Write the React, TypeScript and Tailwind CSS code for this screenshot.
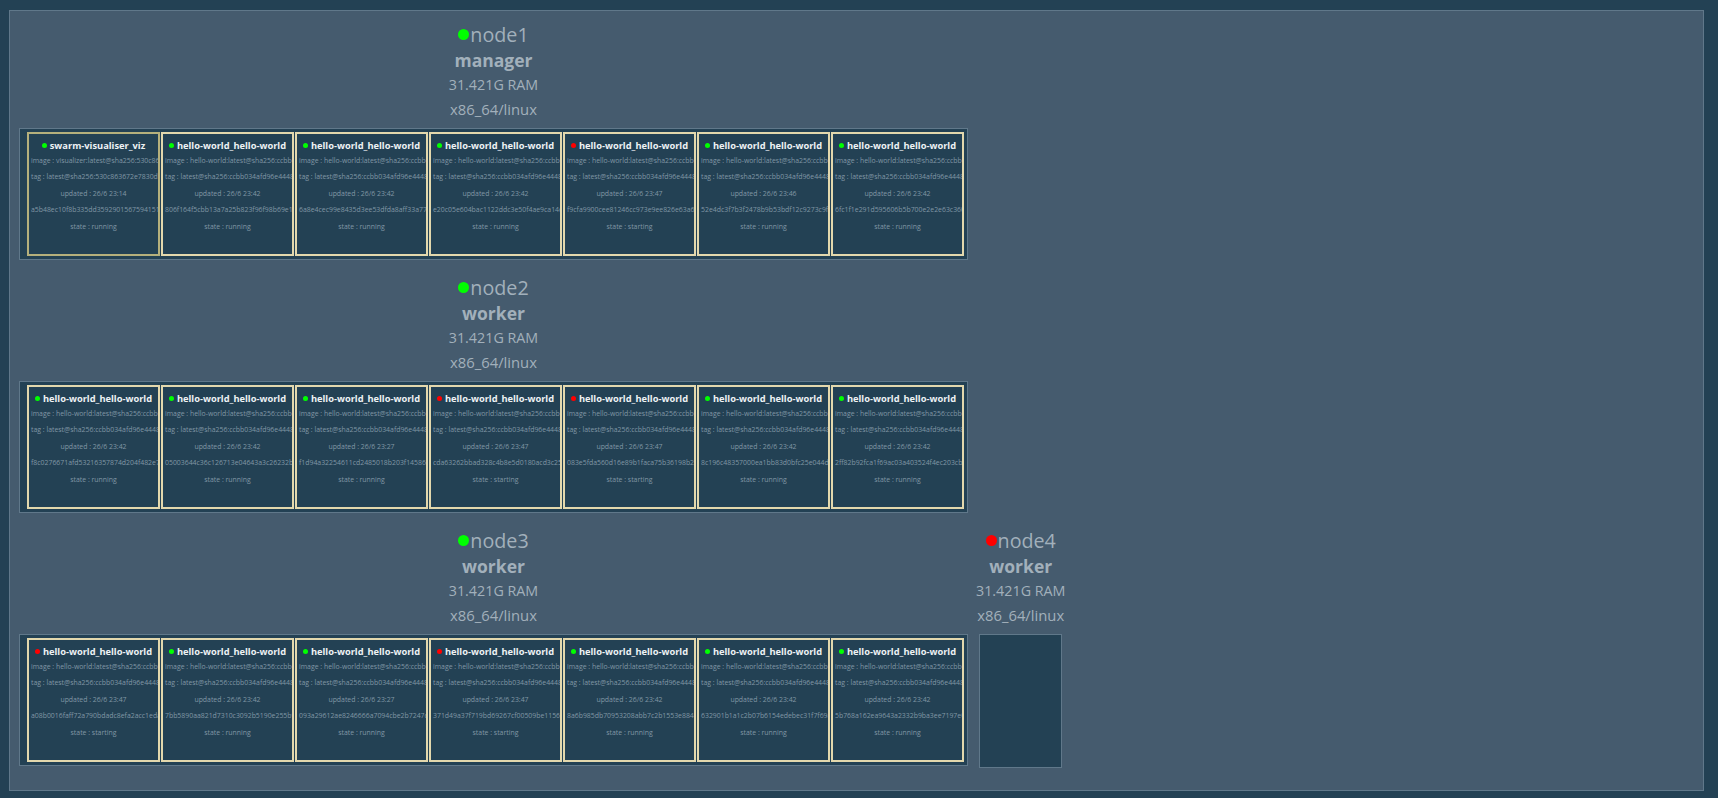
import React from "react";

type C = { name: string; ok: boolean; image: string; tag: string; upd: string; hash: string; state: string };
const HW = "hello-world:latest@sha256:ccbb034afd96e4448b";
const HT = "latest@sha256:ccbb034afd96e4448b";
const mk = (ok: boolean, upd: string, hash: string): C => ({ name: "hello-world_hello-world", ok, image: HW, tag: HT, upd, hash, state: ok ? "running" : "starting" });

const nodes: { name: string; ok: boolean; role: string; cards: C[] }[] = [
  { name: "node1", ok: true, role: "manager", cards: [
    { name: "swarm-visualiser_viz", ok: true, image: "visualizer:latest@sha256:530c863672e7830d7", tag: "latest@sha256:530c863672e7830d7", upd: "23:14", hash: "a5b48ec10f8b335dd359290156759415101", state: "running" },
    mk(true, "23:42", "806f164f5cbb13a7a25b823f96f98b69e1a6"),
    mk(true, "23:42", "6a8e4cec99e8435d3ee53dfda8aff33a77d"),
    mk(true, "23:42", "e20c05e604bac1122ddc3e50f4ae9ca14d6"),
    mk(false, "23:47", "f9cfa9900cee81246cc973e9ee826e63a6"),
    mk(true, "23:46", "52e4dc3f7b3f2478b9b53bdf12c9273c9f"),
    mk(true, "23:42", "6fc1f1e291d595606b5b700e2e2e63c360a"),
  ]},
  { name: "node2", ok: true, role: "worker", cards: [
    mk(true, "23:42", "f8c0276671afd53216357874d204f482e7a"),
    mk(true, "23:42", "05003644c36c126713e04643a3c26232b5f"),
    mk(true, "23:27", "f1d94a32254611cd2485018b203f14586c3"),
    mk(false, "23:47", "cda63262bbad328c4b8e5d0180acd3c252"),
    mk(false, "23:47", "083e5fda560d16e89b1faca75b36198b27"),
    mk(true, "23:42", "8c196c48357000ea1bb83d0bfc25e044d4"),
    mk(true, "23:42", "2ff82b92fca1f69ac03a403524f4ec203cb"),
  ]},
  { name: "node3", ok: true, role: "worker", cards: [
    mk(false, "23:47", "a08b0016faff72a790bdadc8efa2acc1eda"),
    mk(true, "23:42", "7bb5890aa821d7310c3092b5190e255b9"),
    mk(true, "23:27", "093a29612ae8246666a7094cbe2b7247d5"),
    mk(false, "23:47", "371d49a37f719bd69267cf00509be1156"),
    mk(true, "23:42", "8a6b985db70953208abb7c2b1553e884e"),
    mk(true, "23:42", "632901b1a1c2b07b6154edebec31f7f69a"),
    mk(true, "23:42", "5b768a162ea9643a2332b9ba3ee7197e05"),
  ]},
  { name: "node4", ok: false, role: "worker", cards: [] },
];

const Dot = ({ ok, s }: { ok: boolean; s: string }) => (
  <span className={`inline-block shrink-0 rounded-full ${s} ${ok ? "bg-[#00ff00]" : "bg-[#ff0000]"}`} />
);

function Card({ c, first }: { c: C; first: boolean }) {
  return (
    <div className={`w-[133px] h-[124px] shrink-0 bg-[#234154] border-2 ${first ? "border-[#b5b07c]" : "border-[#e3d8ad]"} overflow-hidden text-center`}>
      <div className="mt-[4px] h-[15px] flex items-center justify-center gap-[3px] text-[9.3px] font-bold text-[#eef2f4] whitespace-nowrap">
        <Dot ok={c.ok} s="w-[5px] h-[5px]" />
        <span>{c.name}</span>
      </div>
      <div className="text-[6.9px] text-[#8197a5] leading-[16.4px] whitespace-nowrap">
        <div className="pl-[2px] text-left overflow-hidden">image : {c.image}</div>
        <div className="pl-[2px] text-left overflow-hidden">tag : {c.tag}</div>
        <div>updated : 26/6 {c.upd}</div>
        <div className="pl-[2px] text-left overflow-hidden">{c.hash}</div>
        <div>state : {c.state}</div>
      </div>
    </div>
  );
}

export default function App() {
  return (
    <div className="w-[1718px] h-[798px] bg-[#234154] pt-[10px] pl-[9px]" style={{ fontFamily: '"Open Sans", sans-serif' }}>
      <div className="w-[1695px] h-[781px] bg-[#455b6e] border border-[#60788a] flex flex-wrap items-start content-start gap-x-[8px] pl-[9px] pt-[10px]">
        {nodes.map((n) => (
          <div key={n.name} className="flex flex-col items-center h-[253px]">
            <div className="flex items-center text-[19.7px] leading-[27px] text-[#a2b0bb] gap-[1px]">
              <Dot ok={n.ok} s="w-[11px] h-[11px]" />
              {n.name}
            </div>
            <div className="text-[17.5px] font-bold leading-[24px] text-[#a2b0bb]">{n.role}</div>
            <div className="text-[14.3px] leading-[25px] text-[#a2b0bb]">31.421G RAM</div>
            <div className="text-[14.8px] leading-[25px] text-[#a2b0bb]">x86_64/linux</div>
            <div className={`mt-[6px] bg-[#234154] border border-[#60788a] flex gap-[1px] p-[3px] pl-[7px] ${n.cards.length ? "" : "w-[83px] h-[134px]"}`}>
              {n.cards.map((c, i) => <Card key={i} c={c} first={i === 0 && n.name === "node1"} />)}
            </div>
          </div>
        ))}
      </div>
    </div>
  );
}
